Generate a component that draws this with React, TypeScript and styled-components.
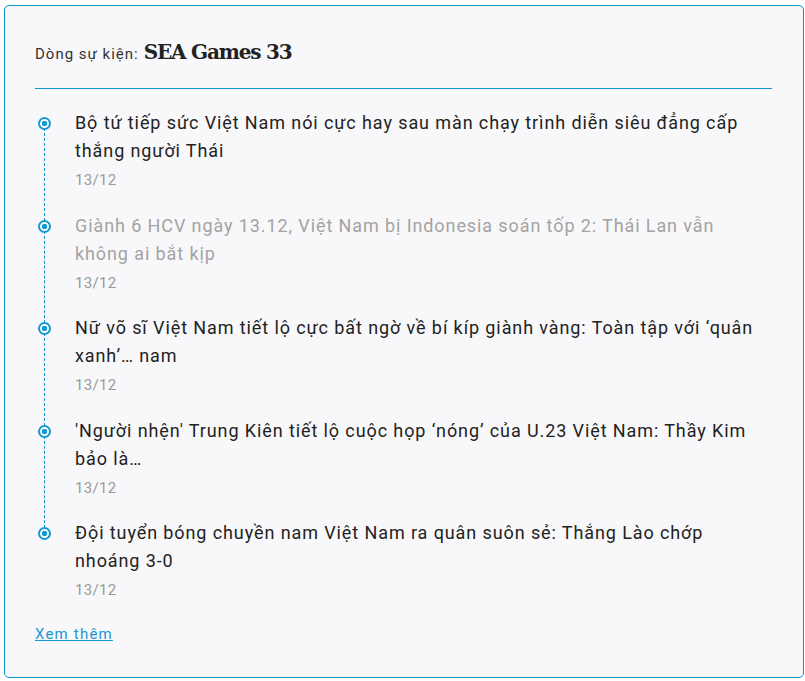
import React from "react";
import styled, { createGlobalStyle } from "styled-components";

const GlobalStyle = createGlobalStyle`
    body {
        margin: 0;
        background: #ffffff;
        font-family: Roboto, "Noto Sans", sans-serif;
    }
`

const Page = styled.div`
    padding: 5px 1px 3px 4px;
`

const Card = styled.section`
    background: #f8f8fa;
    border: 1px solid #0f94cc;
    border-radius: 5px;
    padding: 30px 30px 32px 30px;
    height: 673px;
    box-sizing: border-box;
`

const Header = styled.div`
    display: flex;
    align-items: baseline;
    gap: 5px;
    line-height: 32px;
    padding-bottom: 18px;
    border-bottom: 1px solid #0f94cc;
    margin-right: 1px;

    .label {
        font-size: 15px;
        letter-spacing: 1px;
        color: #333333;
    }
    .name {
        font-family: "DejaVu Serif", "Liberation Serif", serif;
        font-weight: bold;
        font-size: 20px;
        color: #222222;
        letter-spacing: -1.2px;
    }
`

const Timeline = styled.ul`
    list-style: none;
    margin: 0;
    padding: 20px 0 0 0;
`

const Item = styled.li<{ $last?: boolean }>`
    position: relative;
    padding: 0 0 21.5px 40px;

    &::before {
        content: "";
        display: ${p => (p.$last ? "none" : "block")};
        position: absolute;
        left: 9px;
        top: 14px;
        height: 100%;
        border-left: 1px dashed #0f94cc;
    }
`

const Dot = styled.span`
    position: absolute;
    left: 3px;
    top: 8px;
    width: 13px;
    height: 13px;
    box-sizing: border-box;
    border-radius: 50%;
    border: 2px solid #1399d3;
    background: radial-gradient(circle, #1399d3 0 2.6px, #ffffff 3px);
    z-index: 1;
`

const Title = styled.a<{ $visited?: boolean }>`
    display: block;
    font-size: 18px;
    line-height: 28px;
    letter-spacing: 0.9px;
    color: ${p => (p.$visited ? "#a3a3a3" : "#222222")};
    text-decoration: none;
`

const Time = styled.div`
    margin-top: 5px;
    font-size: 15px;
    line-height: 20px;
    letter-spacing: 0.3px;
    color: #999999;
`

const More = styled.a`
    display: inline-block;
    margin-top: 2px;
    font-size: 15px;
    line-height: 20px;
    letter-spacing: 1.2px;
    color: #1a97d2;
    text-decoration: underline;
`

const news = [
    { title: "Bộ tứ tiếp sức Việt Nam nói cực hay sau màn chạy trình diễn siêu đẳng cấp thắng người Thái", visited: false },
    { title: "Giành 6 HCV ngày 13.12, Việt Nam bị Indonesia soán tốp 2: Thái Lan vẫn không ai bắt kịp", visited: true },
    { title: "Nữ võ sĩ Việt Nam tiết lộ cực bất ngờ về bí kíp giành vàng: Toàn tập với ‘quân xanh’… nam", visited: false },
    { title: "'Người nhện' Trung Kiên tiết lộ cuộc họp ‘nóng’ của U.23 Việt Nam: Thầy Kim bảo là…", visited: false },
    { title: "Đội tuyển bóng chuyền nam Việt Nam ra quân suôn sẻ: Thắng Lào chớp nhoáng 3-0", visited: false },
]

export default function App() {
    return (
        <Page>
            <GlobalStyle />
            <Card>
                <Header>
                    <span className="label">Dòng sự kiện:</span>
                    <span className="name">SEA Games 33</span>
                </Header>
                <Timeline>
                    {news.map((n, i) => (
                        <Item key={i} $last={i === news.length - 1}>
                            <Dot />
                            <Title $visited={n.visited}>{n.title}</Title>
                            <Time>13/12</Time>
                        </Item>
                    ))}
                </Timeline>
                <More href="#">Xem thêm</More>
            </Card>
        </Page>
    )
}
